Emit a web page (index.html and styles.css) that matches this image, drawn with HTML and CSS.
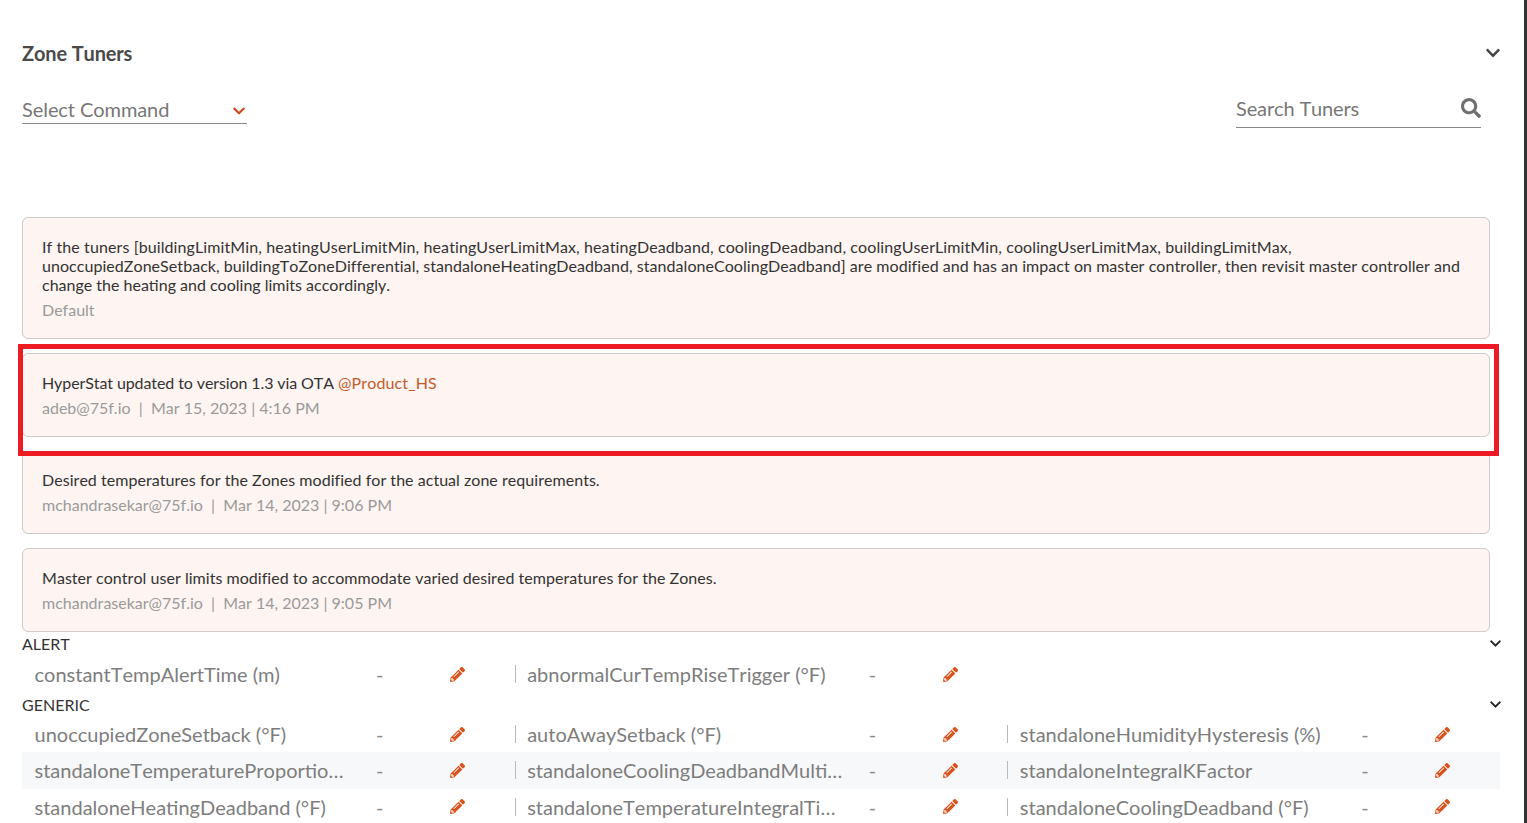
FILE: index.html
```html
<!DOCTYPE html>
<html lang="en">
<head>
<meta charset="utf-8">
<title>Zone Tuners</title>
<link rel="stylesheet" href="styles.css">
</head>
<body>
<svg class="defs" aria-hidden="true">
  <symbol id="chev" viewBox="0 0 448 512"><path d="M207.029 381.476L12.686 187.132c-9.373-9.373-9.373-24.569 0-33.941l22.667-22.667c9.357-9.357 24.522-9.375 33.901-.04L224 284.505l154.745-154.021c9.379-9.335 24.544-9.317 33.901.04l22.667 22.667c9.373 9.373 9.373 24.569 0 33.941L240.971 381.476c-9.373 9.372-24.569 9.372-33.942 0z"/></symbol>
  <symbol id="search" viewBox="0 0 512 512"><path d="M505 442.7L405.3 343c-4.5-4.5-10.6-7-17-7H372c27.6-35.3 44-79.7 44-128C416 93.1 322.9 0 208 0S0 93.1 0 208s93.1 208 208 208c48.3 0 92.7-16.4 128-44v16.3c0 6.4 2.5 12.5 7 17l99.7 99.7c9.4 9.4 24.6 9.4 33.9 0l28.3-28.3c9.4-9.4 9.4-24.6.1-34zM208 336c-70.7 0-128-57.2-128-128 0-70.7 57.2-128 128-128 70.7 0 128 57.2 128 128 0 70.7-57.2 128-128 128z"/></symbol>
  <symbol id="pencil" viewBox="0 0 512 512"><path d="M497.9 142.1l-46.1 46.1c-4.7 4.7-12.3 4.7-17 0l-111-111c-4.7-4.7-4.7-12.3 0-17l46.1-46.1c18.7-18.7 49.1-18.7 67.9 0l60.1 60.1c18.8 18.7 18.8 49.1 0 67.9zM284.2 99.8L21.6 362.4.4 483.9c-2.9 16.4 11.4 30.6 27.8 27.8l121.5-21.3 262.6-262.6c4.7-4.7 4.7-12.3 0-17l-111-111c-4.8-4.7-12.4-4.7-17.1 0zM124.1 339.9c-5.5-5.5-5.5-14.3 0-19.8l154-154c5.5-5.5 14.3-5.5 19.8 0s5.5 14.3 0 19.8l-154 154c-5.5 5.5-14.3 5.5-19.8 0zM88 424h48v36.3l-64.5 11.3-31.1-31.1L51.7 376H88v48z"/></symbol>
</svg>
<div class="app">
  <main class="main">
    <header class="head">
      <h1 class="title">Zone Tuners</h1>
      <svg class="chev chev-head"><use href="#chev"/></svg>
    </header>
    <div class="tools">
      <div class="select">
        <span>Select Command</span>
        <svg class="chev chev-select"><use href="#chev"/></svg>
      </div>
      <div class="searchbox">
        <span>Search Tuners</span>
        <svg class="search-icon"><use href="#search"/></svg>
      </div>
    </div>
    <section class="notes">
      <article class="note note-first">
        <p class="note-text"><span class="line line-a">If the tuners [buildingLimitMin, heatingUserLimitMin, heatingUserLimitMax, heatingDeadband, coolingDeadband, coolingUserLimitMin, coolingUserLimitMax, buildingLimitMax,</span> <span class="line line-b">unoccupiedZoneSetback, buildingToZoneDifferential, standaloneHeatingDeadband, standaloneCoolingDeadband] are modified and has an impact on master controller, then revisit master controller and</span> <span class="line line-c">change the heating and cooling limits accordingly.</span></p>
        <p class="note-meta">Default</p>
      </article>
      <article class="note">
        <p class="note-text note-tight">HyperStat updated to version 1.3 via OTA <span class="mention">@Product_HS</span></p>
        <p class="note-meta">adeb@75f.io &nbsp;|&nbsp; Mar 15, 2023 | 4:16 PM</p>
        <div class="frame"></div>
      </article>
      <article class="note note-third">
        <p class="note-text">Desired temperatures for the Zones modified for the actual zone requirements.</p>
        <p class="note-meta">mchandrasekar@75f.io &nbsp;|&nbsp; Mar 14, 2023 | 9:06 PM</p>
      </article>
      <article class="note">
        <p class="note-text">Master control user limits modified to accommodate varied desired temperatures for the Zones.</p>
        <p class="note-meta">mchandrasekar@75f.io &nbsp;|&nbsp; Mar 14, 2023 | 9:05 PM</p>
      </article>
    </section>
    <section class="group">
      <div class="group-head"><span>ALERT</span><svg class="chev chev-group"><use href="#chev"/></svg></div>
      <div class="row">
        <div class="cell"><span class="name">constantTempAlertTime (m)</span><span class="dash">-</span><svg class="pencil"><use href="#pencil"/></svg></div>
        <div class="cell"><span class="name">abnormalCurTempRiseTrigger (°F)</span><span class="dash">-</span><svg class="pencil"><use href="#pencil"/></svg></div>
      </div>
    </section>
    <section class="group group-next">
      <div class="group-head"><span>GENERIC</span><svg class="chev chev-group"><use href="#chev"/></svg></div>
      <div class="row">
        <div class="cell"><span class="name">unoccupiedZoneSetback (°F)</span><span class="dash">-</span><svg class="pencil"><use href="#pencil"/></svg></div>
        <div class="cell"><span class="name">autoAwaySetback (°F)</span><span class="dash">-</span><svg class="pencil"><use href="#pencil"/></svg></div>
        <div class="cell"><span class="name">standaloneHumidityHysteresis (%)</span><span class="dash">-</span><svg class="pencil"><use href="#pencil"/></svg></div>
      </div>
      <div class="row row-shaded">
        <div class="cell"><span class="name">standaloneTemperatureProportionalKFactor</span><span class="dash">-</span><svg class="pencil"><use href="#pencil"/></svg></div>
        <div class="cell"><span class="name">standaloneCoolingDeadbandMultiplier</span><span class="dash">-</span><svg class="pencil"><use href="#pencil"/></svg></div>
        <div class="cell"><span class="name">standaloneIntegralKFactor</span><span class="dash">-</span><svg class="pencil"><use href="#pencil"/></svg></div>
      </div>
      <div class="row">
        <div class="cell"><span class="name">standaloneHeatingDeadband (°F)</span><span class="dash">-</span><svg class="pencil"><use href="#pencil"/></svg></div>
        <div class="cell"><span class="name">standaloneTemperatureIntegralTime</span><span class="dash">-</span><svg class="pencil"><use href="#pencil"/></svg></div>
        <div class="cell"><span class="name">standaloneCoolingDeadband (°F)</span><span class="dash">-</span><svg class="pencil"><use href="#pencil"/></svg></div>
      </div>
    </section>
  </main>
  <div class="edge"></div>
</div>
</body>
</html>
```
FILE: styles.css
```css
* { box-sizing: border-box; }
html, body { margin: 0; height: 100%; overflow: hidden; background: #fff; }
body { font-family: Lato, "Noto Sans", sans-serif; color: #333; font-kerning: none; }
.defs { display: none; }
.app { display: flex; height: 823px; overflow: hidden; }
.main { flex: 1; min-width: 0; padding: 0 24px 0 22px; }
.edge { width: 3px; background: #333; }

.head { display: flex; justify-content: space-between; align-items: center; height: 24px; margin-top: 41px; }
.title { margin: 0; font-size: 20px; line-height: 24px; font-weight: 700; color: #4a4a4a; letter-spacing: -0.15px; }
.chev { fill: #333; display: block; flex: none; }
.chev-head { width: 14px; height: 16px; fill: #444; }

.tools { display: flex; justify-content: space-between; align-items: flex-start; margin-top: 29px; margin-right: 19px; height: 123px; }
.select { width: 225px; height: 30px; display: flex; justify-content: space-between; align-items: center; border-bottom: 1px solid #8a8a8a; font-size: 20px; letter-spacing: -0.08px; color: #777; padding-right: 1px; }
.chev-select { width: 12px; height: 14px; fill: #c8481a; margin-right: 1px; margin-top: 5px; }
.searchbox { width: 245px; height: 34px; padding-bottom: 6px; display: flex; justify-content: space-between; align-items: center; border-bottom: 1px solid #8a8a8a; font-size: 20px; letter-spacing: -0.15px; color: #777; }
.search-icon { width: 20px; height: 20px; fill: #6f6f6f; margin-top: 1px; }

.notes { display: flex; flex-direction: column; gap: 14px; margin-right: 10px; }
.note { position: relative; background: #fef4f1; border: 1px solid #cfc9c7; border-radius: 6px; padding: 19px 19px 0; height: 83.5px; }
.note-first { height: 122px; }
.note-third { padding-top: 18.5px; }
.note-text { margin: 0; font-size: 16px; line-height: 19px; color: #333; white-space: nowrap; letter-spacing: 0.035px; }
.note-tight { letter-spacing: -0.1px; }
.line { display: block; }
.line-a { letter-spacing: 0.1px; }
.line-b { letter-spacing: 0.05px; }
.line-c { letter-spacing: 0; }
.note-meta { margin: 6px 0 0; font-size: 16px; line-height: 19px; color: #9a9a9a; }
.mention { color: #c75b2a; letter-spacing: 0.15px; }
.frame { position: absolute; z-index: 1; left: -5px; top: -10px; width: 1481px; height: 112px; border: 5px solid #ed1c24; pointer-events: none; }

.group-head { display: flex; justify-content: space-between; align-items: center; height: 24.5px; font-size: 16px; color: #333; }
.group-next .group-head { height: 24px; }
.chev-group { width: 11px; height: 13px; margin-right: -1px; fill: #222; }
.row { display: grid; grid-template-columns: repeat(3, 1fr); height: 36px; }
.row-shaded { background: #f7f8f9; height: 36.5px; }
.cell { display: flex; align-items: center; padding-left: 12.5px; position: relative; }
.cell + .cell::before { content: ""; position: absolute; left: 0; top: 9px; height: 18px; border-left: 1px solid #bbb; }
.name { width: 341.5px; padding-right: 26.3px; flex: none; font-size: 20px; color: #7d7d7d; white-space: nowrap; overflow: hidden; text-overflow: ellipsis; }
.dash { width: 74px; flex: none; font-size: 20px; color: #8a8a8a; }
.pencil { width: 15px; height: 15px; fill: #d9531e; display: block; }
```
